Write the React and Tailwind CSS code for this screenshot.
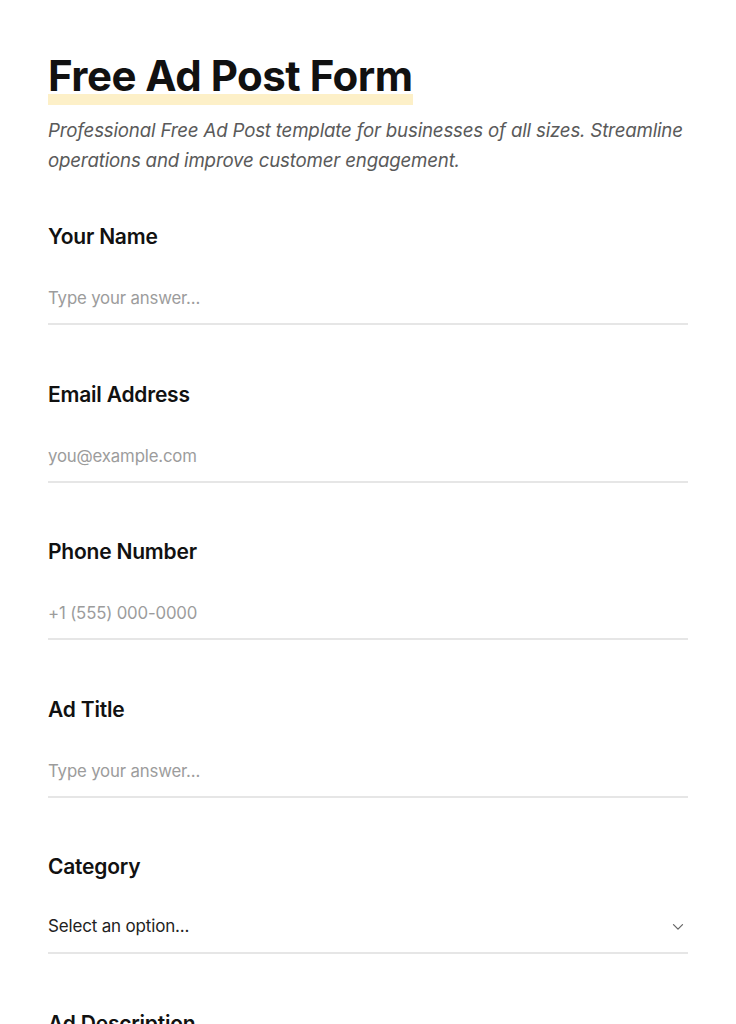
import React, { useState } from 'react';

const fields = [
  { label: 'Your Name', type: 'text', placeholder: 'Type your answer...' },
  { label: 'Email Address', type: 'email', placeholder: 'you@example.com' },
  { label: 'Phone Number', type: 'tel', placeholder: '+1 (555) 000-0000' },
  { label: 'Ad Title', type: 'text', placeholder: 'Type your answer...' },
];

const categories = ['Electronics', 'Vehicles', 'Real Estate', 'Jobs', 'Services', 'Other'];

const ChevronDown = () => (
  <svg width="14" height="14" viewBox="0 0 14 14" fill="none" className="text-[#666]">
    <path d="M2.5 5 L7 9.5 L11.5 5" stroke="currentColor" strokeWidth="1.3" strokeLinecap="round" strokeLinejoin="round" />
  </svg>
);

const App = () => {
  const [category, setCategory] = useState('');

  return (
    <div className="min-h-screen bg-white font-['Inter','Liberation_Sans',sans-serif] text-[#111]">
      <div className="px-12 pt-[52px] pb-16">
        {/* Header */}
        <h1 className="text-[42px] font-bold tracking-[-0.012em] leading-[48px]">
          <span className="inline-block pb-[5px] shadow-[inset_0_-11px_0_#fdf0c8]">Free Ad Post Form</span>
        </h1>
        <p className="mt-[11px] text-[18.7px] italic leading-[30px] text-[#5a5a5a] tracking-[-0.01em]">
          Professional Free Ad Post template for businesses of all sizes. Streamline operations and improve customer engagement.
        </p>

        {/* Fields */}
        <form className="mt-[47px] flex flex-col gap-[55.5px]">
          {fields.map((f, i) => (
            <div key={i} className="flex flex-col">
              <label className="text-[21px] font-semibold leading-[28px] tracking-[-0.01em]">{f.label}</label>
              <input
                type={f.type}
                placeholder={f.placeholder}
                className="mt-[22px] h-[52px] w-full border-b-2 border-[#e6e6e6] bg-transparent text-[16.8px] tracking-[-0.01em] text-[#111] placeholder-[#9c9c9c] focus:outline-none"
              />
            </div>
          ))}

          <div className="flex flex-col">
            <label className="text-[21px] font-semibold leading-[28px] tracking-[-0.01em]">Category</label>
            <div className="relative mt-[21px]">
              <select
                value={category}
                onChange={(e) => setCategory(e.target.value)}
                className="h-[52px] w-full appearance-none border-b-2 border-[#e6e6e6] bg-transparent text-[17px] tracking-[-0.01em] text-[#222] focus:outline-none"
              >
                <option value="">Select an option...</option>
                {categories.map(c => (
                  <option key={c} value={c}>{c}</option>
                ))}
              </select>
              <div className="pointer-events-none absolute right-[3px] top-1/2 -translate-y-[60%]">
                <ChevronDown />
              </div>
            </div>
          </div>

          <div className="flex flex-col">
            <label className="text-[21px] font-semibold leading-[28px] tracking-[-0.01em]">Ad Description</label>
            <textarea
              rows={4}
              placeholder="Type your answer..."
              className="mt-[22px] w-full resize-none border-b-2 border-[#e6e6e6] bg-transparent text-[17px] text-[#111] placeholder-[#9c9c9c] focus:outline-none"
            />
          </div>
        </form>
      </div>
    </div>
  );
};

export default App;
